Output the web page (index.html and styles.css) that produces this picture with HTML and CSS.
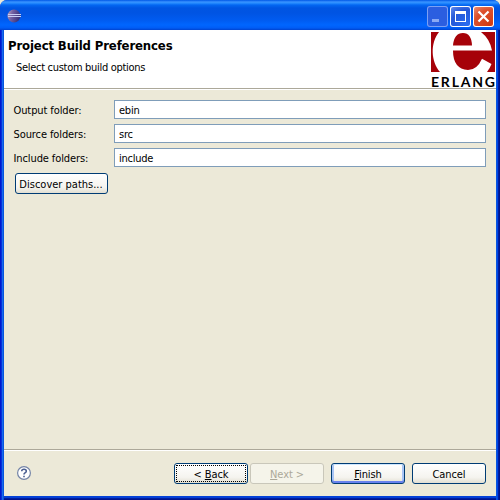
FILE: index.html
```html
<!DOCTYPE html>
<html lang="en">
<head>
<meta charset="utf-8">
<title>Project Build Preferences</title>
<link rel="stylesheet" href="styles.css">
</head>
<body>
<div class="window">
  <div class="titlebar">
    <svg class="app-icon" width="14" height="14" viewBox="0 0 14 14">
      <defs><linearGradient id="orb" x1="0" y1="0" x2="1" y2="0.3"><stop offset="0" stop-color="#c4a9bd"/><stop offset="0.4" stop-color="#7563a4"/><stop offset="1" stop-color="#39337c"/></linearGradient></defs>
      <circle cx="7" cy="7" r="6.500" fill="url(#orb)"/>
      <path d="M1 5H14V6H1zM1 7H14V8H1z" fill="#c6cdf4"/>
    </svg>
    <div class="controls">
      <span class="ctl dim"><svg width="21" height="21"><path d="M5 13h7v3H5z" fill="#8aa9f4"/></svg></span>
      <span class="ctl"><svg width="21" height="21"><path d="M5 5h11v11H5zM6 8v7h9V8z" fill="#fff" fill-rule="evenodd"/></svg></span>
      <span class="ctl close"><svg width="21" height="21"><path d="M5.500 5.500l10 10M15.500 5.500l-10 10" stroke="#fff" stroke-width="2.200"/></svg></span>
    </div>
  </div>
  <div class="client">
    <div class="header">
      <div class="heading">
        <h1>Project Build Preferences</h1>
        <p>Select custom build options</p>
      </div>
      <svg class="logo" width="66" height="58" viewBox="0 0 66 58">
        <path d="M1 2H65V42H1z" fill="#a60209"/>
        <path d="M9 2C0 13 1 32 10 42H57Q60 38 61.500 34L52 28.700Q47 40 38 40Q23 39 23 20.500H62Q60 9 51 2ZM23 15.500Q24 3 33 3Q41.500 3 42 15.500Z" fill="#fff" fill-rule="evenodd"/>
        <text x="1" y="56.500" textLength="64" lengthAdjust="spacing">ERLANG</text>
      </svg>
    </div>
    <div class="form">
      <label class="row"><span>Output folder:</span><b class="field">ebin</b></label>
      <label class="row"><span>Source folders:</span><b class="field">src</b></label>
      <label class="row"><span>Include folders:</span><b class="field">include</b></label>
      <button class="btn discover">Discover paths...</button>
    </div>
    <div class="footer">
      <svg class="help" width="16" height="16" viewBox="0 0 16 16"><circle cx="8" cy="8" r="6.400" fill="#fff" stroke="#7484a6" stroke-width="1.200"/><path d="M5.700 6.300Q5.800 4.300 8 4.300Q10.300 4.300 10.300 6.200Q10.300 7.200 9 7.900Q8 8.500 8 9.500M8 10.700V12.300" fill="none" stroke="#4b5f91" stroke-width="1.600"/></svg>
      <button class="btn back"><span>&lt; <u>B</u>ack</span></button>
      <button class="btn next" disabled><span><u>N</u>ext &gt;</span></button>
      <button class="btn finish"><span><u>F</u>inish</span></button>
      <button class="btn cancel"><span>Cancel</span></button>
    </div>
  </div>
</div>
</body>
</html>
```
FILE: styles.css
```css
* { box-sizing: border-box; }
body { margin: 0; background: #ece9d8; font: 11px/14px "DejaVu Sans Condensed", "DejaVu Sans", sans-serif; font-stretch: condensed; letter-spacing: -0.1px; color: #000; }
.window { width: 500px; height: 500px; display: flex; flex-direction: column; border-radius: 7px 7px 0 0; padding: 0 4px 4px; overflow: hidden;
  background: linear-gradient(90deg, #0019cf 0 1px, #0831d9 1px 2px, #166aee 2px 3px, #0855dd 3px 4px, transparent 4px 496px, #0855dd 496px 497px, #0046e8 497px 498px, #001ea0 498px 499px, #00138c 499px), linear-gradient(0deg, #00138c 0 1px, #001ea0 1px 2px, #0441d8 2px 4px, #0855dd 4px); }
.titlebar { height: 30px; margin: 0 -4px; padding: 0 6px 0 7px; display: flex; align-items: center; justify-content: space-between;
  background: linear-gradient(#0058e6 0, #3a93ff 2px, #288eff 3px, #0367f2 5px, #0055e2 8px, #0054e3 13px, #005bf0 20px, #0066ff 25px, #005cf5 28px, #0043cf 30px); }
.app-icon { margin-top: 2px; }
.controls { display: flex; gap: 2px; padding-top: 3px; }
.ctl { width: 21px; height: 21px; border-radius: 3px; overflow: hidden; box-shadow: inset 0 0 0 1px #fff; background: radial-gradient(circle at 80% 90%, #2a6bf0, #2558d8 60%, #6d94ef 100%); }
.ctl svg, .logo, .help { display: block; }
.dim { box-shadow: inset 0 0 0 1px #7ca0f4; background: #2b5ee0; }
.close { background: radial-gradient(circle at 80% 90%, #d23b12, #dc4f2c 60%, #ee9a80 100%); }
.client { flex: 1; display: flex; flex-direction: column; background: #ece9d8; }
.header { height: 59px; display: flex; justify-content: space-between; background: #fff; border-bottom: 1px solid #aca899; box-shadow: 0 1px #fff; }
.heading { padding: 8px 0 0 4px; }
h1, p { margin: 0; font: inherit; white-space: nowrap; }
h1 { font-size: 13px; font-weight: bold; line-height: 16px; letter-spacing: -0.13px; }
p { padding: 7px 0 0 8px; letter-spacing: -0.3px; }
.logo text { font: bold 14px Lato, sans-serif; letter-spacing: 0; }
.form { flex: 1; padding: 11px 10px 0; display: flex; flex-direction: column; gap: 5px; }
.row { display: grid; grid-template-columns: 100px 1fr; height: 19px; align-items: center; }
.row > span { justify-self: start; white-space: nowrap; margin-left: -0.5px; padding-top: 2px; }
.field { height: 19px; border: 1px solid #7f9db9; background: #fff; padding: 3px 4px 0; font-weight: normal; line-height: 14px; letter-spacing: -0.25px; }
.btn { flex: none; height: 21px; border: 1px solid #003c74; border-radius: 3px; padding: 0; font: inherit; letter-spacing: -0.1px; color: #000; background: linear-gradient(#fff, #f5f4ef 70%, #e2dfd2); white-space: nowrap; }
.btn span { position: relative; top: 1px; }
.discover { width: 93px; align-self: flex-start; margin: 1px 0 0 1px; padding: 2px 1px 0 0; letter-spacing: 0; }
.footer { height: 46px; border-top: 1px solid #fff; padding: 0 10px 0 12px; display: flex; align-items: center; box-shadow: 0 -1px #aca899; }
.help { margin: 0 auto 2px 0; }
.footer .btn { width: 74px; }
u { text-underline-offset: 1px; text-decoration-thickness: 1px; }
.back { position: relative; }
.back::after { content: ""; position: absolute; inset: 1px; border: 1px dotted #000; }
.footer .next { margin: 0 7px 0 2px; color: #aca899; border-color: #c9c7ba; background: #f5f4ea; }
.finish { box-shadow: inset 0 1px #cee7ff, inset 0 -2px #6982ee, inset 2px 0 #a9c5f5, inset -2px 0 #a9c5f5; }
.footer .cancel { margin-left: 7px; }
```
